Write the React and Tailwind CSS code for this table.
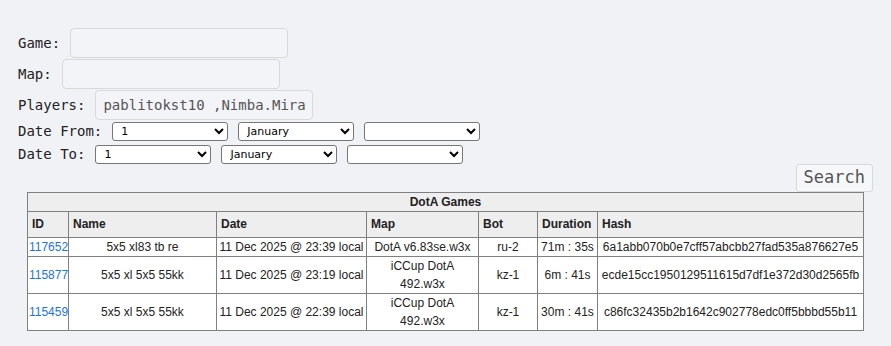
import React from "react";

const mono = "font-['DejaVu_Sans_Mono',monospace]";

const days = ["1"];
const months = ["January"];

const games = [
  { id: "117652", name: "5x5 xl83 tb re", date: "11 Dec 2025 @ 23:39 local", map: "DotA v6.83se.w3x", bot: "ru-2", duration: "71m : 35s", hash: "6a1abb070b0e7cff57abcbb27fad535a876627e5" },
  { id: "115877", name: "5x5 xl 5x5 55kk", date: "11 Dec 2025 @ 23:19 local", map: "iCCup DotA 492.w3x", bot: "kz-1", duration: "6m : 41s", hash: "ecde15cc1950129511615d7df1e372d30d2565fb" },
  { id: "115459", name: "5x5 xl 5x5 55kk", date: "11 Dec 2025 @ 22:39 local", map: "iCCup DotA 492.w3x", bot: "kz-1", duration: "30m : 41s", hash: "c86fc32435b2b1642c902778edc0ff5bbbd55b11" },
];

function TextRow({ label, value }) {
  return (
    <div className="flex items-center gap-[10px] h-[30px] mb-[1px]">
      <span className="text-[14px] text-[#222]">{label}</span>
      <input
        readOnly
        value={value || ""}
        className={`${mono} w-[218px] h-[30px] border border-[#d9d9d9] rounded-[4px] bg-[#f3f4f8] px-[7px] text-[14px] text-[#555] outline-none`}
      />
    </div>
  );
}

function DateSelects({ label, className }) {
  const sel = "w-[116px] h-[19px] border border-[#767676] rounded-[3px] bg-white text-[11px] text-black pl-[4px] font-['DejaVu_Sans',sans-serif]";
  return (
    <div className={`flex items-center gap-[10px] ${className}`}>
      <span className="text-[14px] text-[#222]">{label}</span>
      <div className="flex gap-[10px]">
        <select className={sel} defaultValue="1">
          {days.map((d) => <option key={d}>{d}</option>)}
        </select>
        <select className={sel} defaultValue="January">
          {months.map((m) => <option key={m}>{m}</option>)}
        </select>
        <select className={sel} defaultValue="">
          <option value=""></option>
        </select>
      </div>
    </div>
  );
}

export default function App() {
  const th = "border border-[#808080] bg-[#eeeeee] text-left font-bold px-[4px] py-[4px] leading-[17px]";
  const td = "border border-[#808080] text-center px-[1px] py-0 leading-[18px]";
  return (
    <div className={`min-h-[346px] bg-[#f1f2f6] px-[18px] pt-[28px] ${mono}`}>
      <TextRow label="Game:" />
      <TextRow label="Map:" />
      <TextRow label="Players:" value="pablitokst10 ,Nimba.Mira" />
      <DateSelects label="Date From:" className="mt-[1px] h-[20px]" />
      <DateSelects label="Date To:" className="mt-[3px] h-[20px]" />

      <div className="flex justify-end">
        <button className="h-[28px] px-[7px] border border-[#d9d9d9] rounded-[3px] bg-[#f6f7f9] text-[17px] text-[#555]">
          Search
        </button>
      </div>

      <table className="table-fixed border-collapse w-[836px] mx-auto bg-white font-['Liberation_Sans',Arial,sans-serif] text-[12px] text-[#222]">
        <colgroup>
          <col className="w-[41px]" />
          <col className="w-[148px]" />
          <col className="w-[150px]" />
          <col className="w-[112px]" />
          <col className="w-[59px]" />
          <col className="w-[60px]" />
          <col className="w-[266px]" />
        </colgroup>
        <thead>
          <tr>
            <th colSpan={7} className="border border-[#808080] bg-[#eeeeee] text-center font-bold py-0 leading-[18px]">
              DotA Games
            </th>
          </tr>
          <tr>
            <th className={th}>ID</th>
            <th className={th}>Name</th>
            <th className={th}>Date</th>
            <th className={th}>Map</th>
            <th className={th}>Bot</th>
            <th className={th}>Duration</th>
            <th className={th}>Hash</th>
          </tr>
        </thead>
        <tbody>
          {games.map((g) => (
            <tr key={g.id}>
              <td className={`${td} text-left`}>
                <a href="#" className="text-[#1a73e8]">{g.id}</a>
              </td>
              <td className={td}>{g.name}</td>
              <td className={td}>{g.date}</td>
              <td className={`${td} px-[4px]`}>{g.map}</td>
              <td className={td}>{g.bot}</td>
              <td className={td}>{g.duration}</td>
              <td className={td}>{g.hash}</td>
            </tr>
          ))}
        </tbody>
      </table>
    </div>
  );
}
